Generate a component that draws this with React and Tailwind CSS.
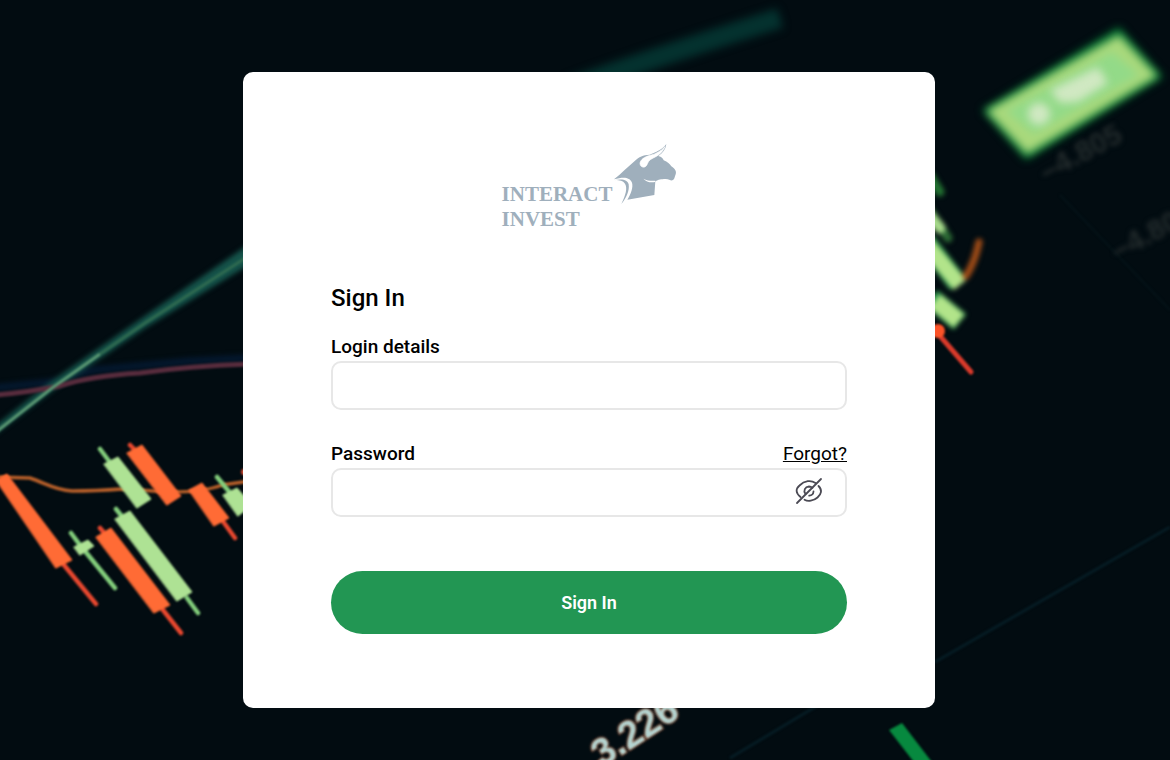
function MarketBackdrop() {
    return (
        <svg
            className="fixed inset-0 w-full h-full bg-[#020c11]"
            viewBox="0 0 1170 760"
            preserveAspectRatio="xMidYMid slice"
            aria-hidden="true"
        >
            <defs>
                <filter id="soft" x="-20%" y="-20%" width="140%" height="140%" colorInterpolationFilters="sRGB"><feGaussianBlur stdDeviation="1.1" /></filter>
                <filter id="blur" x="-20%" y="-20%" width="140%" height="140%" colorInterpolationFilters="sRGB"><feGaussianBlur stdDeviation="2.4" /></filter>
                <filter id="haze" x="-30%" y="-30%" width="160%" height="160%" colorInterpolationFilters="sRGB"><feGaussianBlur stdDeviation="4" /></filter>
            </defs>

            {/* --- TREND LINES --- */}
            <g fill="none">
                <path d="M570 88 Q640 62 780 18" stroke="#04322f" strokeWidth="20" filter="url(#haze)" />
                <g filter="url(#blur)">
                    <path d="M-6 388 L52 382 L95 370 L190 361 L250 358" stroke="#04182f" strokeWidth="7" />
                    <path d="M-6 427 L52 381 L145 316 L252 242 L252 263 L145 328 L52 391 L-6 435 Z" fill="#15534a" />
                </g>
                <g filter="url(#soft)">
                    <path d="M-4 395 Q30 392 60 386 Q90 376 140 373 Q190 366 250 364" stroke="#572c3d" strokeWidth="5" />
                    <path d="M-4 432 L52 388 L100 354" stroke="#5b9873" strokeWidth="3" />
                    <path d="M100 354 L145 323 L250 255" stroke="#2f6a50" strokeWidth="3" />
                    <path d="M-4 477 L30 478 C45 483 55 490 72 491 Q95 491 122 489 L170 492 Q205 492 222 485 L250 481" stroke="#b9602a" strokeWidth="3.5" />
                    <path d="M935 662 L1170 527 M730 758 L820 704" stroke="#061c24" strokeWidth="3" />
                    <path d="M1060 195 L1170 310" stroke="#051318" strokeWidth="2" />
                </g>
            </g>

            {/* --- CANDLES, LEFT --- */}
            <g filter="url(#soft)" strokeLinecap="round">
                <g fill="#ff6b35" stroke="#e9482f" strokeWidth="4.5">
                    <path d="M64 565 L96 604 M163 610 L181 633 M222 520 L235 538 M100 528 L106 535 M130 445 L137 452" fill="none" />
                    <path d="M-4 480 L7 474 L72 560 L56 568 Z M96 537 L111 528 L170 605 L154 613 Z M127 453 L142 445 L181 496 L167 505 Z M189 490 L202 483 L229 518 L214 526 Z" stroke="#ff6b35" strokeWidth="1" />
                </g>
                <g fill="#aee294" stroke="#83cf7c" strokeWidth="4.5">
                    <path d="M71 533 L80 545 L115 588 M116 509 L124 519 M187 598 L198 613 M100 449 L109 461 M217 477 L231 494" fill="none" />
                    <path d="M74 547 L88 540 L94 546 L80 555 Z M115 519 L130 511 L192 592 L177 601 Z M104 464 L118 457 L151 499 L137 508 Z M223 495 L237 488 L252 505 L238 516 Z" stroke="#aee294" strokeWidth="1" />
                </g>
                <circle cx="244" cy="472" r="3" fill="#d94b2f" />
            </g>

            {/* --- CANDLES, RIGHT --- */}
            <g filter="url(#blur)" fill="none" strokeLinecap="round">
                <path d="M930 176 L940 192" stroke="#237432" strokeWidth="9" />
                <path d="M926 206 L948 238" stroke="#2c6b35" strokeWidth="9" />
                <path d="M928 214 L940 228" stroke="#a8dc8c" strokeWidth="11" />
                <path d="M925 241 L958 284" stroke="#2f9c50" strokeWidth="20" strokeLinecap="butt" />
                <path d="M925 243 L960 285" stroke="#b2e48a" strokeWidth="16" strokeLinecap="butt" />
                <path d="M931 298 L960 322" stroke="#2f9c50" strokeWidth="20" strokeLinecap="butt" />
                <path d="M935 301 L959 321" stroke="#b2e48a" strokeWidth="17" strokeLinecap="butt" />
                <path d="M979 242 Q975 262 966 276" stroke="#a34d17" strokeWidth="7" />
            </g>
            <g filter="url(#soft)">
                <path d="M940 336 L971 372" stroke="#d93a2b" strokeWidth="5" strokeLinecap="round" />
                <circle cx="938" cy="331" r="7" fill="#fc5328" />
                <path d="M889 730 L902 723 L938 770 L920 770 Z" fill="#07893f" />
            </g>

            {/* --- PRICE TAG --- */}
            <g filter="url(#haze)">
                <path d="M982 110 L1119 27 L1163 77 L1026 160 Z" fill="#067535" />
            </g>
            <g filter="url(#haze)">
                <path d="M987 111 L1119 35 L1157 76 L1027 154 Z" fill="#a9d97c" />
                <path d="M1006 111 L1112 52 L1139 75 L1034 134 Z" fill="#93da88" />
            </g>
            <g filter="url(#haze)" fill="#d0e8c2">
                <circle cx="1039" cy="114" r="11" />
                <path d="M1050 90 L1098 67 L1108 83 L1078 102 L1060 103 Z" />
            </g>

            {/* --- AXIS LABELS --- */}
            <g fontFamily="'Liberation Sans', Arial, sans-serif">
                <g filter="url(#blur)" fill="#242c2d" fontSize="29" fontWeight="bold">
                    <text transform="translate(1046 182) rotate(-28)">–4.805</text>
                    <text transform="translate(1118 261) rotate(-28)">–4.80</text>
                </g>
                <text
                    transform="translate(602 768) rotate(-33)"
                    filter="url(#soft)"
                    fill="#b4d4d1"
                    stroke="#8a4a30"
                    strokeWidth="2"
                    paintOrder="stroke"
                    fontSize="38"
                    fontWeight="bold"
                >
                    3.226
                </text>
            </g>
        </svg>
    );
}

function Logo() {
    return (
        <div className="flex justify-center pl-px text-[#9fafbc]">
            <div className="mt-[38px] font-['Liberation_Serif',serif] font-bold text-[21px] leading-[25px]">
                <div>INTERACT</div>
                <div>INVEST</div>
            </div>
            <svg className="w-[63px] h-[60px] ml-0.5" viewBox="375 41 189 180" fill="currentColor" aria-hidden="true">
                <path d="M375 147 C398 128 418 108 438 91 C450 80 462 74 482 73 C500 66 520 58 532 41 C530 57 522 68 508 77 C518 79 522 84 524 90 C536 95 542 101 547 108 C559 117 563 123 560 132 C557 140 556 149 550 150 C544 151 540 146 530 146 C515 146 509 148 499 153 L496 194 L415 208 C426 190 433 171 429 157 C422 139 402 139 375 147 Z" />
                <path d="M528 49 C515 63 500 71 484 75 C467 79 454 88 453 99 C453 107 459 112 467 110 C476 107 474 95 484 88 C496 80 518 74 528 49 Z" fill="white" stroke="white" strokeWidth="2" />
                <path d="M463 145 C474 151 488 152 499 151 L498 155 C484 158 471 154 463 145 Z" fill="white" />
                <path d="M379 149 C402 144 416 150 419 162 C422 181 412 204 397 221 C410 194 416 173 408 160 C402 151 392 150 379 149 Z" />
            </svg>
        </div>
    );
}

function EyeOffIcon() {
    return (
        <svg className="w-7 h-7" viewBox="0 0 28 28" fill="none" stroke="#4b4a54" strokeWidth="1.8" strokeLinecap="round" aria-hidden="true">
            <path d="M2 26 L26 2" />
            <path d="M5.5 20 C0.5 16 0.5 12 4.5 8.5 C9.5 3.5 16 2.8 20.5 6" />
            <path d="M23.5 9 C27.5 13 26.5 17 22.5 20.5 C18.5 24 13 24.8 9.5 22.8" />
            <path d="M10.5 17 C8 13.5 10 9.8 14 9.5 C15.5 9.5 16.6 10 17.4 10.8" />
            <path d="M18.5 14.5 C18.3 17 16.7 18.5 14.2 18.6" />
        </svg>
    );
}

export default function App() {
    return (
        <main className="min-h-screen flex justify-center items-start pt-[72px] pb-[52px] pl-2 font-[Roboto,sans-serif] text-black">
            <MarketBackdrop />

            <div className="relative w-full max-w-[692px] bg-white rounded-[10px] px-[88px] pt-[72px] pb-[74px]">
                <Logo />

                <form className="mt-[50px]" onSubmit={(e) => e.preventDefault()}>
                    <h1 className="text-2xl font-medium leading-8">Sign In</h1>

                    <label htmlFor="login" className="block mt-[21px] text-[19px] font-medium leading-6">Login details</label>
                    <input
                        id="login"
                        type="text"
                        className="block w-full h-[49px] mt-0.5 px-4 border-2 border-[#e7e7e7] rounded-[10px] text-lg outline-none"
                    />

                    <div className="flex justify-between mt-8 text-[19px] leading-6">
                        <label htmlFor="password" className="font-medium">Password</label>
                        <a href="#forgot" className="underline">Forgot?</a>
                    </div>
                    <div className="flex items-center w-full h-[49px] mt-0.5 pr-[22px] border-2 border-[#e7e7e7] rounded-[10px]">
                        <input id="password" type="password" className="flex-1 min-w-0 h-full px-4 text-lg outline-none" />
                        <button type="button" aria-label="Show password" className="mb-1">
                            <EyeOffIcon />
                        </button>
                    </div>

                    <button type="submit" className="block w-full h-[63px] mt-[54px] rounded-full bg-[#229653] text-white text-lg font-semibold">
                        Sign In
                    </button>
                </form>
            </div>
        </main>
    );
}
